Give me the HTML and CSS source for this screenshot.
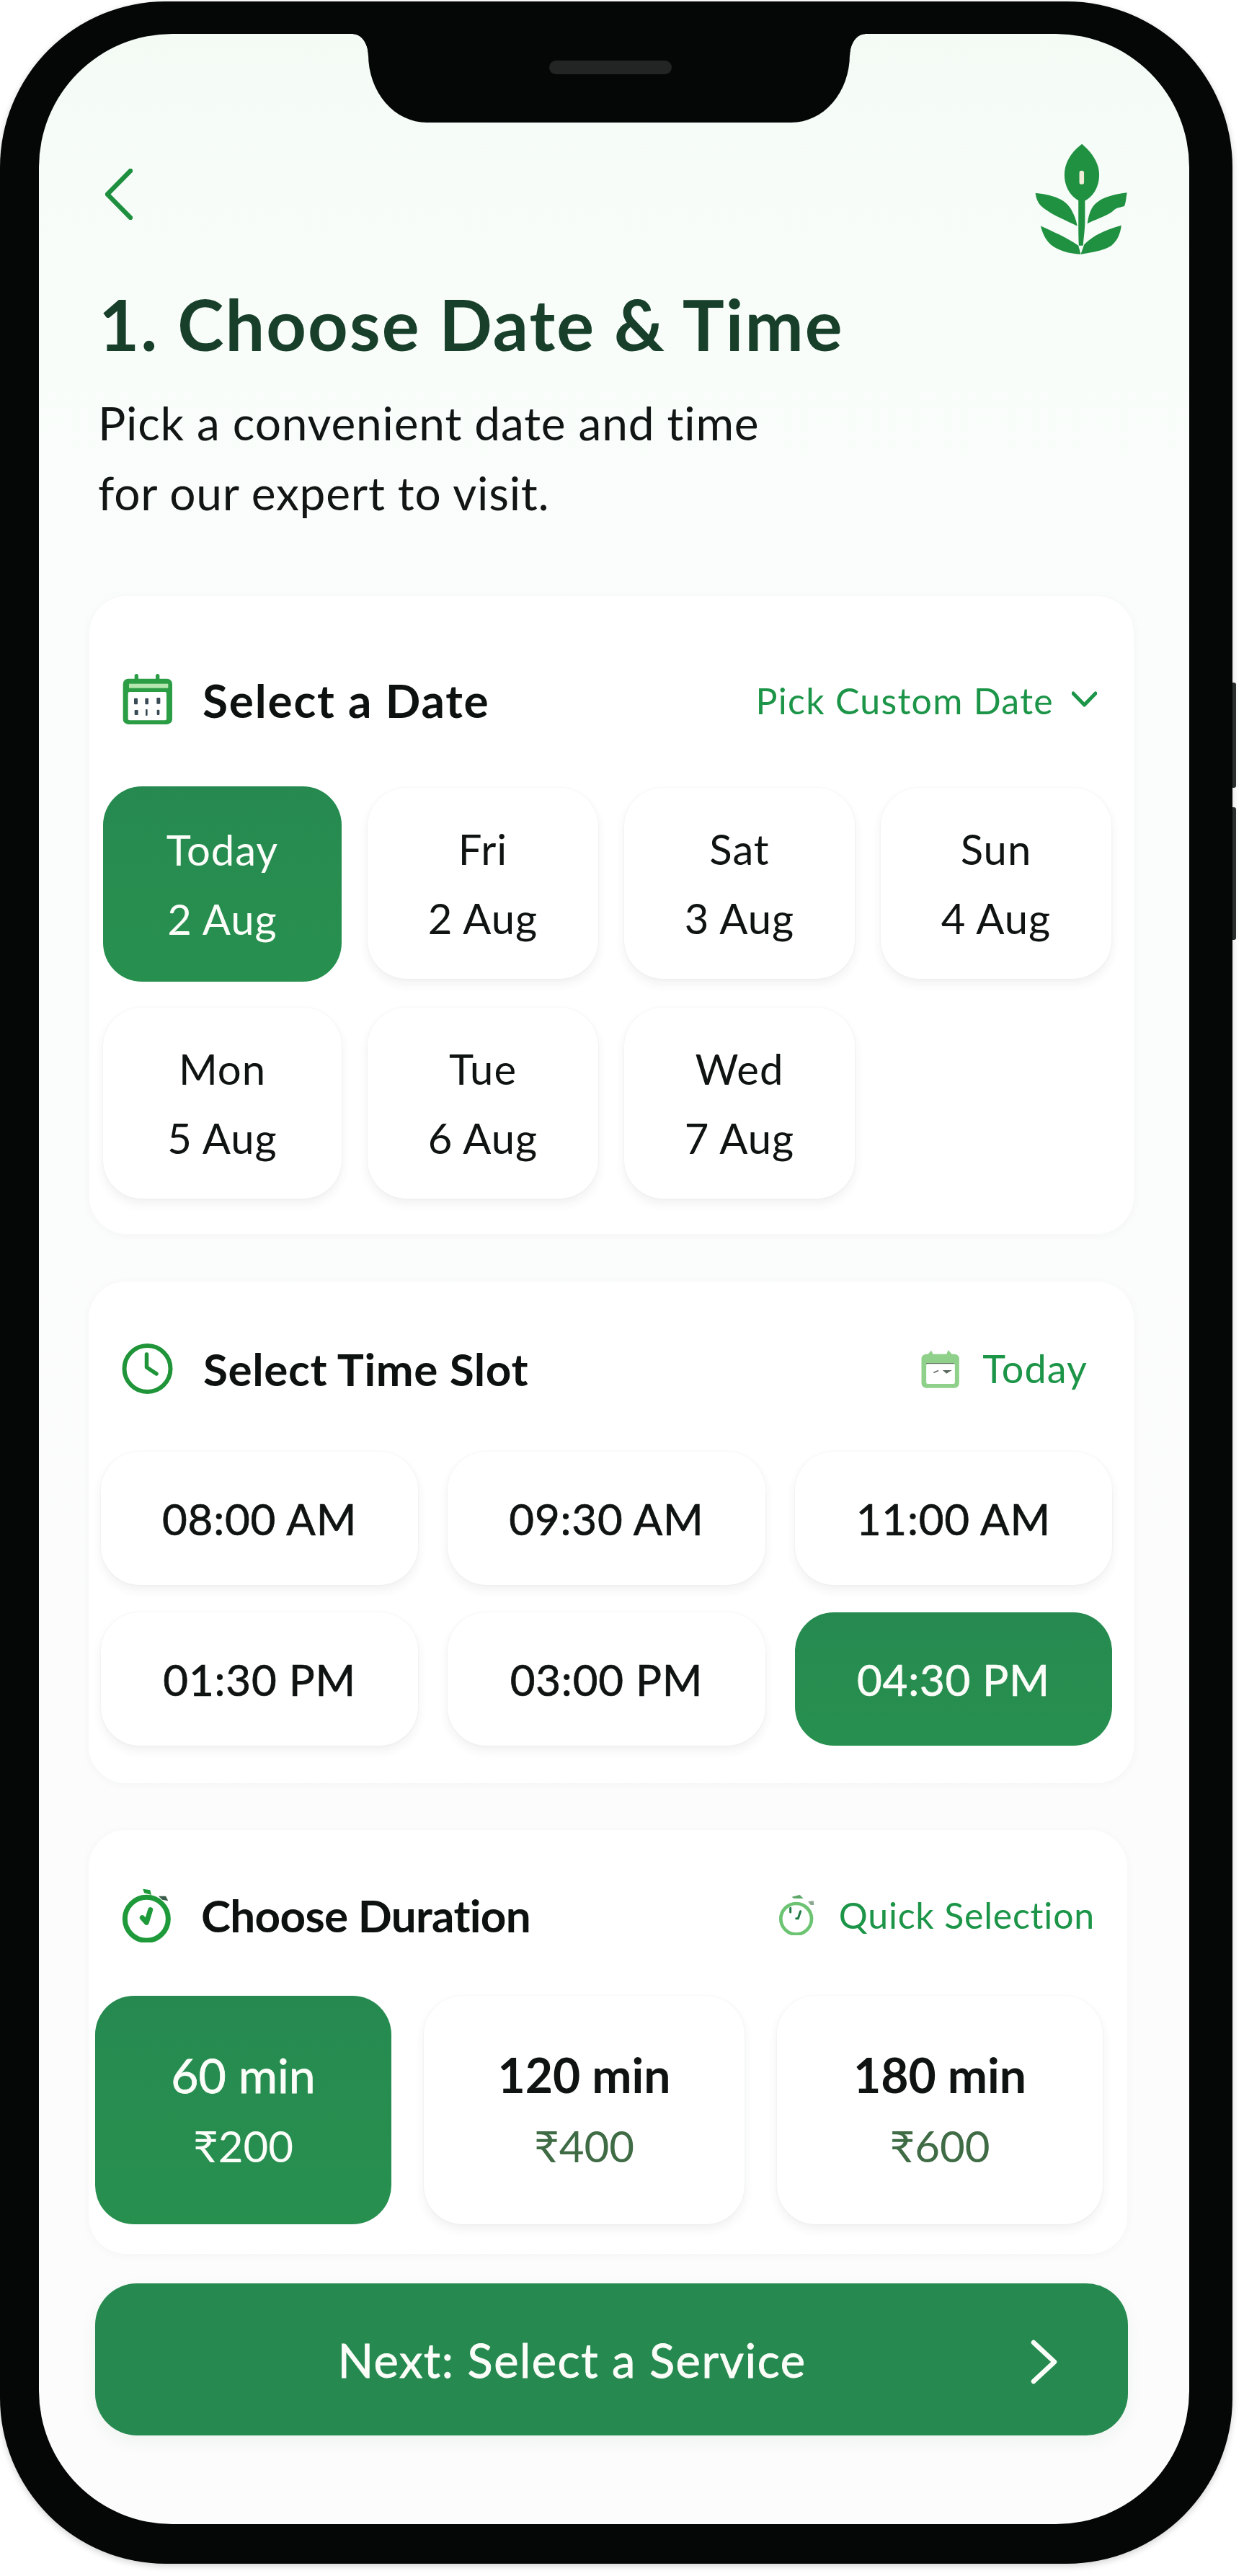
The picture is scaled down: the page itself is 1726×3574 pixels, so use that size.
FILE: index.html
```html
<!DOCTYPE html>
<html lang="en">
<head>
<meta charset="utf-8">
<title>Choose Date &amp; Time</title>
<link rel="stylesheet" href="styles.css">
</head>
<body>
<div class="phone">
  <span class="side-btn side-btn-a"></span>
  <span class="side-btn side-btn-b"></span>
  <main class="screen">
    <div class="notch"><span class="speaker"></span></div>

    <header class="topbar">
      <svg class="back" viewBox="0 0 38 71"><path d="M35 3 3 35.500 35 68"/></svg>
      <svg class="logo" viewBox="160 20 400 475">
        <path d="M365 25C325 55 291 100 291 155C291 210 320 255 365 270C410 255 438 210 438 155C438 100 400 55 365 25Z"/>
        <path d="M350 262H378V345C378 390 372 420 370 455H352C350 420 350 390 350 345Z"/>
        <path d="M168 233C230 238 290 255 315 295C332 322 342 350 345 372C300 350 240 325 215 305C195 290 175 280 168 233Z"/>
        <path d="M556 231C500 238 450 250 420 280C400 300 392 335 388 362C420 345 470 330 495 310C510 295 520 295 545 288C552 270 552 250 556 231Z"/>
        <path d="M190 372C240 395 300 420 350 455L360 492C320 490 280 482 245 460C215 440 200 410 190 372Z"/>
        <path d="M532 370C480 385 420 405 375 450L360 492C400 485 450 480 490 455C515 435 528 405 532 370Z"/>
        <rect class="logo-hole" x="354" y="138" width="20" height="58" rx="9"/>
      </svg>
    </header>

    <h1 class="title">1. Choose Date &amp; Time</h1>
    <p class="subtitle">Pick a convenient date and time<br>for our expert to visit.</p>

    <section class="card card-date">
      <div class="card-head">
        <div class="head-left">
          <svg class="ico-cal" viewBox="120 42 210 216">
            <rect class="g" x="170" y="45" width="16" height="34" rx="8"/>
            <rect class="g" x="258" y="45" width="16" height="34" rx="8"/>
            <rect class="g" x="122" y="65" width="205" height="190" rx="22"/>
            <rect class="strip" x="147" y="86" width="163" height="18"/>
            <rect class="win" x="143" y="120" width="160" height="118" rx="6"/>
            <rect class="dot" x="168" y="146" width="15" height="26" rx="3"/>
            <rect class="dot" x="214" y="146" width="14" height="26" rx="3"/>
            <rect class="dot" x="262" y="144" width="15" height="26" rx="3"/>
            <rect class="dot" x="170" y="195" width="15" height="21" rx="3"/>
            <rect class="dot" x="216" y="192" width="8" height="27" rx="3"/>
            <rect class="dot" x="263" y="194" width="11" height="22" rx="3"/>
          </svg>
          <h2 class="head-title">Select a Date</h2>
        </div>
        <div class="head-right">
          <span class="link">Pick Custom Date</span>
          <svg class="chev-down" viewBox="0 0 35 22"><path d="M2 3 17.500 19 33 3"/></svg>
        </div>
      </div>
      <div class="date-grid">
        <button class="tile date-tile selected selected-date"><span>Today</span><span>2 Aug</span></button>
        <button class="tile date-tile"><span>Fri</span><span>2 Aug</span></button>
        <button class="tile date-tile"><span>Sat</span><span>3 Aug</span></button>
        <button class="tile date-tile"><span>Sun</span><span>4 Aug</span></button>
        <button class="tile date-tile"><span>Mon</span><span>5 Aug</span></button>
        <button class="tile date-tile"><span>Tue</span><span>6 Aug</span></button>
        <button class="tile date-tile"><span>Wed</span><span>7 Aug</span></button>
      </div>
    </section>

    <section class="card card-time">
      <div class="card-head">
        <div class="head-left">
          <svg class="ico-clock" viewBox="0 0 71 70">
            <circle cx="35.500" cy="35" r="32"/>
            <path d="M34.500 15V33L48 42"/>
          </svg>
          <h2 class="head-title">Select Time Slot</h2>
        </div>
        <div class="head-right">
          <svg class="ico-today" viewBox="85 38 160 160">
            <path class="tab" d="M108 60 126 40 136 60ZM188 60 197 38 216 60Z"/>
            <rect class="body" x="85" y="55" width="158" height="142" rx="20"/>
            <rect class="win" x="105" y="95" width="120" height="85" rx="6"/>
            <path class="line" d="M105 94H222"/>
            <path class="mark" d="M136 133 156 124M180 125H204L190 134Z"/>
          </svg>
          <span class="link">Today</span>
        </div>
      </div>
      <div class="time-grid">
        <button class="tile time-tile">08:00 AM</button>
        <button class="tile time-tile">09:30 AM</button>
        <button class="tile time-tile">11:00 AM</button>
        <button class="tile time-tile">01:30 PM</button>
        <button class="tile time-tile">03:00 PM</button>
        <button class="tile time-tile selected">04:30 PM</button>
      </div>
    </section>

    <section class="card card-duration">
      <div class="card-head">
        <div class="head-left">
          <svg class="ico-watch" viewBox="57 50 207 228">
            <path class="knob" d="M145 55 175 60 180 80 150 72Z"/>
            <path class="knob-dark" d="M210 85 240 85 250 105 225 100Z"/>
            <circle class="ring" cx="160" cy="180" r="90"/>
            <path class="hand" d="M142 175 160 195 176 142"/>
          </svg>
          <h2 class="head-title">Choose Duration</h2>
        </div>
        <div class="head-right">
          <svg class="ico-quick" viewBox="66 60 150 168">
            <path class="knob" d="M122 68 155 60 170 75 130 75Z"/>
            <path class="knob-dark" d="M190 88 212 85 214 102 200 102Z"/>
            <circle class="ring" cx="140" cy="160" r="64"/>
            <path class="hand" d="M116 115V132M158 128 148 158 140 158"/>
          </svg>
          <span class="link">Quick Selection</span>
        </div>
      </div>
      <div class="duration-grid">
        <button class="tile duration-tile selected"><strong>60 min</strong><span>₹200</span></button>
        <button class="tile duration-tile"><strong>120 min</strong><span>₹400</span></button>
        <button class="tile duration-tile"><strong>180 min</strong><span>₹600</span></button>
      </div>
    </section>

    <button class="next">
      <span>Next: Select a Service</span>
      <svg class="next-chev" viewBox="0 0 37 62"><path d="M4 4 33 31 4 58"/></svg>
    </button>
  </main>
</div>
</body>
</html>
```
FILE: styles.css
```css
* { box-sizing: border-box; }
html, body { margin: 0; background: #fff; }
body { width: 1726px; height: 3574px; font-family: Lato, "Noto Sans", sans-serif; color: #0f1312; }
button { font-family: inherit; border: 0; padding: 0; margin: 0; cursor: pointer; }
h1, h2, p { margin: 0; }

.phone {
  position: relative;
  width: 1710px;
  height: 3555px;
  margin-top: 2px;
  padding: 45px 60px 55px 54px;
  background: #050606;
  border-radius: 230px;
  box-shadow: 0 3px 10px rgba(0, 0, 0, .18);
}
.side-btn { position: absolute; right: -5px; width: 5px; background: #2a2f2e; border-radius: 0 3px 3px 0; }
.side-btn-a { top: 945px; height: 146px; }
.side-btn-b { top: 1118px; height: 184px; }

.screen {
  position: relative;
  height: 100%;
  padding-top: 151px;
  border-radius: 185px;
  background: linear-gradient(180deg, #f4fbf5 0, #f9fdfa 12%, #fbfdfc 40%, #fbfcfb 100%);
  overflow: hidden;
}
.notch {
  position: absolute;
  left: 457px;
  top: 0;
  width: 668px;
  height: 123px;
  background: #050606;
  border-radius: 0 0 81px 81px / 0 0 94px 94px;
}
.notch::before, .notch::after {
  content: "";
  position: absolute;
  top: 0;
  width: 21px;
  height: 30px;
}
.notch::before { left: -21px; background: radial-gradient(ellipse 21px 30px at 0 100%, transparent 97%, #050606 100%); }
.notch::after { right: -21px; background: radial-gradient(ellipse 21px 30px at 100% 100%, transparent 97%, #050606 100%); }
.speaker { position: absolute; left: 251px; top: 37px; width: 170px; height: 19px; border-radius: 10px; background: #232524; }

.topbar { display: flex; justify-content: space-between; align-items: center; height: 155px; padding: 0 85px 0 92px; }
.back { width: 38px; height: 71px; margin-top: -12px; }
.back path { fill: none; stroke: #1e8f3f; stroke-width: 6.500; stroke-linecap: round; stroke-linejoin: round; }
.logo { width: 131px; height: 156px; }
.logo path { fill: #1f9140; }
.logo-hole { fill: #f1ecd8; }

.title { margin: 42px 0 0 83px; font-size: 97px; line-height: 110px; font-weight: 700; letter-spacing: 2.100px; color: #173f2a; white-space: nowrap; }
.subtitle { margin: 33px 0 0 82px; font-size: 64px; line-height: 97px; font-weight: 400; letter-spacing: .8px; color: #111514; }

.card { background: #fff; border-radius: 52px; box-shadow: 0 2px 14px rgba(40, 70, 50, .035); }
.card-date { margin: 95px 77px 0 70px; padding: 107px 31px 49px 19px; }
.card-time { margin: 66px 77px 0 69px; padding: 86px 30px 52px 17px; }
.card-duration { margin: 65px 86px 0 69px; padding: 80px 34px 41px 9px; }

.card-head { display: flex; justify-content: space-between; align-items: center; }
.head-left, .head-right { display: flex; align-items: center; }
.head-title { font-size: 62px; line-height: 70px; font-weight: 700; color: #0d1110; white-space: nowrap; }
.link { font-size: 50px; line-height: 60px; color: #1c9548; white-space: nowrap; }

.card-date .card-head { height: 72px; margin-bottom: 87px; padding: 0 20px 0 27px; }
.card-date .head-left { gap: 41px; }
.card-date .head-right { gap: 25px; }
.card-date .head-title { font-size: 64px; letter-spacing: 1.800px; padding-top: 3px; }
.card-date .link { letter-spacing: 1.300px; padding-top: 3px; }
.card-time .card-head { height: 70px; margin-bottom: 80px; padding: 0 34px 0 29px; }
.card-time .head-left { gap: 42px; }
.card-time .head-right { gap: 31px; }
.card-time .head-title { letter-spacing: .6px; }
.card-time .link { font-size: 54px; letter-spacing: 1.100px; }
.card-duration .card-head { height: 76px; margin-bottom: 74px; padding: 0 11px 0 37px; }
.card-duration .head-left { gap: 41px; }
.card-duration .head-right { gap: 34px; }
.card-duration .head-title { letter-spacing: -.7px; }
.card-duration .link { letter-spacing: .8px; }

.ico-cal { width: 70px; height: 72px; }
.ico-cal .g { fill: #2a9d45; }
.ico-cal .strip { fill: #b5e6b0; }
.ico-cal .win { fill: #fff; }
.ico-cal .dot { fill: #3a4a55; }
.chev-down { width: 35px; height: 22px; }
.chev-down path { fill: none; stroke: #1c9548; stroke-width: 5; stroke-linecap: round; stroke-linejoin: round; }

.ico-clock { width: 71px; height: 70px; }
.ico-clock circle { fill: none; stroke: #1f9438; stroke-width: 6; }
.ico-clock path { fill: none; stroke: #1f9438; stroke-width: 5.500; stroke-linecap: round; stroke-linejoin: round; }

.ico-today { width: 54px; height: 53px; }
.ico-today .tab, .ico-today .body { fill: #8fd08a; }
.ico-today .win { fill: #fff; }
.ico-today .line { fill: none; stroke: #5b6d5b; stroke-width: 4; }
.ico-today .mark { fill: #5d6a5f; stroke: #5d6a5f; stroke-width: 5; }

.ico-watch { width: 69px; height: 76px; }
.ico-watch .ring { fill: none; stroke: #1f9a3a; stroke-width: 21; }
.ico-watch .hand { fill: none; stroke: #1f9a3a; stroke-width: 21; stroke-linecap: round; stroke-linejoin: round; }
.ico-watch .knob { fill: #1f9a3a; }
.ico-watch .knob-dark { fill: #3b5b4a; }

.ico-quick { width: 50px; height: 56px; }
.ico-quick .ring { fill: none; stroke: #6cc472; stroke-width: 14; }
.ico-quick .hand { fill: none; stroke: #1f7a45; stroke-width: 9; stroke-linecap: round; }
.ico-quick .knob { fill: #5da868; }
.ico-quick .knob-dark { fill: #8aa88e; }

.tile {
  display: flex;
  flex-direction: column;
  align-items: center;
  justify-content: center;
  background: #fff;
  color: #0f1312;
  border-radius: 54px;
  box-shadow: 0 7px 14px rgba(40, 50, 45, .07), 0 0 3px rgba(40, 50, 45, .06);
}
.tile.selected {
  background: linear-gradient(180deg, #268a50, #27904f);
  color: #fbfdf8;
  box-shadow: none;
}
.date-grid { display: grid; grid-template-columns: 331px repeat(3, 1fr); grid-auto-rows: 265px; gap: 40px 36px; }
.date-tile { font-size: 58px; line-height: 96px; letter-spacing: 1px; }
.selected-date { margin: -2px 0 -4px; }

.time-grid { display: grid; grid-template-columns: repeat(3, 1fr); grid-auto-rows: 185px; gap: 38px 41px; }
.time-tile { font-size: 60px; letter-spacing: .8px; -webkit-text-stroke: .7px currentColor; }

.duration-grid { display: grid; grid-template-columns: 411px 445px 1fr; gap: 45px; height: 317px; }
.duration-tile strong { font-size: 66px; line-height: 98px; font-weight: 700; }
.duration-tile span { font-size: 60px; line-height: 98px; color: #3f6b45; }
.duration-tile.selected strong { font-weight: 400; -webkit-text-stroke: .8px currentColor; }
.duration-tile.selected span { color: #fbfdf8; }

.next {
  position: relative;
  display: flex;
  align-items: center;
  justify-content: center;
  width: 1433px;
  height: 211px;
  margin: 41px 0 0 78px;
  border-radius: 58px;
  background: #268a50;
  color: #fbfdf8;
  font-size: 65px;
  letter-spacing: 1.500px;
  padding-right: 110px;
  -webkit-text-stroke: .8px currentColor;
  box-shadow: 0 8px 24px rgba(40, 70, 50, .05);
}
.next-chev { position: absolute; right: 98px; top: 78px; width: 37px; height: 62px; }
.next-chev path { fill: none; stroke: #fbfdf8; stroke-width: 6.500; stroke-linecap: round; stroke-linejoin: round; }
```
